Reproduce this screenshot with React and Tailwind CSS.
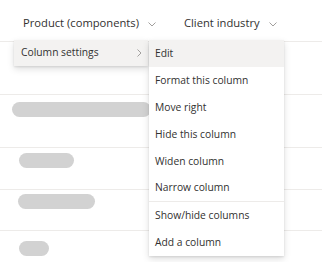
import React from 'react';

const menuItems = [
  { label: 'Edit', active: true },
  { label: 'Format this column' },
  { label: 'Move right' },
  { label: 'Hide this column' },
  { label: 'Widen column' },
  { label: 'Narrow column', divider: true },
  { label: 'Show/hide columns' },
  { label: 'Add a column' },
];

const rows = [
  { h: 'h-[53px]', pill: null },
  { h: 'h-[53px] pt-[7px] pl-[12px]', pill: 'w-[139px]' },
  { h: 'h-[42px] pt-[5px] pl-[19px]', pill: 'w-[55px]' },
  { h: 'h-[41px] pt-[4px] pl-[18px]', pill: 'w-[77px]' },
  { h: 'h-[40px] pt-[10px] pl-[19px]', pill: 'w-[30px]' },
];

function ChevronDown() {
  return (
    <svg width="8" height="5" viewBox="0 0 8 5" className="ml-[9px] mt-[2px]">
      <path d="M0.5 0.5 L4 4 L7.5 0.5" fill="none" stroke="#a19f9d" strokeWidth="1" />
    </svg>
  );
}

function ChevronRight() {
  return (
    <svg width="5" height="8" viewBox="0 0 5 8">
      <path d="M0.5 0.5 L4 4 L0.5 7.5" fill="none" stroke="#a19f9d" strokeWidth="1" />
    </svg>
  );
}

export default function App() {
  return (
    <div
      className="relative w-[322px] h-[262px] overflow-hidden bg-white text-[#323130]"
      style={{ fontFamily: '"Open Sans", "Noto Sans", sans-serif' }}
    >
      {/* Header */}
      <div className="h-[42px] border-b border-[#edebe9] flex items-center text-[11.2px] pt-[6px]">
        <div className="flex items-center ml-[23px] w-[161px]">
          <span>Product (components)</span>
          <ChevronDown />
        </div>
        <div className="flex items-center">
          <span>Client industry</span>
          <ChevronDown />
        </div>
      </div>

      {/* Rows */}
      {rows.map((r, i) => (
        <div key={i} className={`${r.h} border-b border-[#edebe9]`}>
          {r.pill && <div className={`${r.pill} h-[15px] rounded-full bg-[#d2d2d2]`} />}
        </div>
      ))}

      {/* Context menu */}
      <div className="absolute left-[14px] top-[40px] w-[134px] h-[26px] bg-[#f3f2f1] shadow-[0_3px_7px_rgba(0,0,0,0.13),0_1px_2px_rgba(0,0,0,0.1)] flex items-center justify-between pl-[7px] pr-[6px] text-[10.3px]">
        <span>Column settings</span>
        <ChevronRight />
      </div>

      {/* Submenu */}
      <div className="absolute left-[149px] top-[40px] w-[135px] bg-white shadow-[0_3px_7px_rgba(0,0,0,0.13),0_1px_2px_rgba(0,0,0,0.1)] text-[10.3px]">
        {menuItems.map((m) => (
          <div
            key={m.label}
            className={`h-[27px] flex items-center pl-[6px] ${m.active ? 'bg-[#f3f2f1]' : ''} ${m.divider ? 'border-b border-[#edebe9]' : ''}`}
          >
            {m.label}
          </div>
        ))}
      </div>
    </div>
  );
}
